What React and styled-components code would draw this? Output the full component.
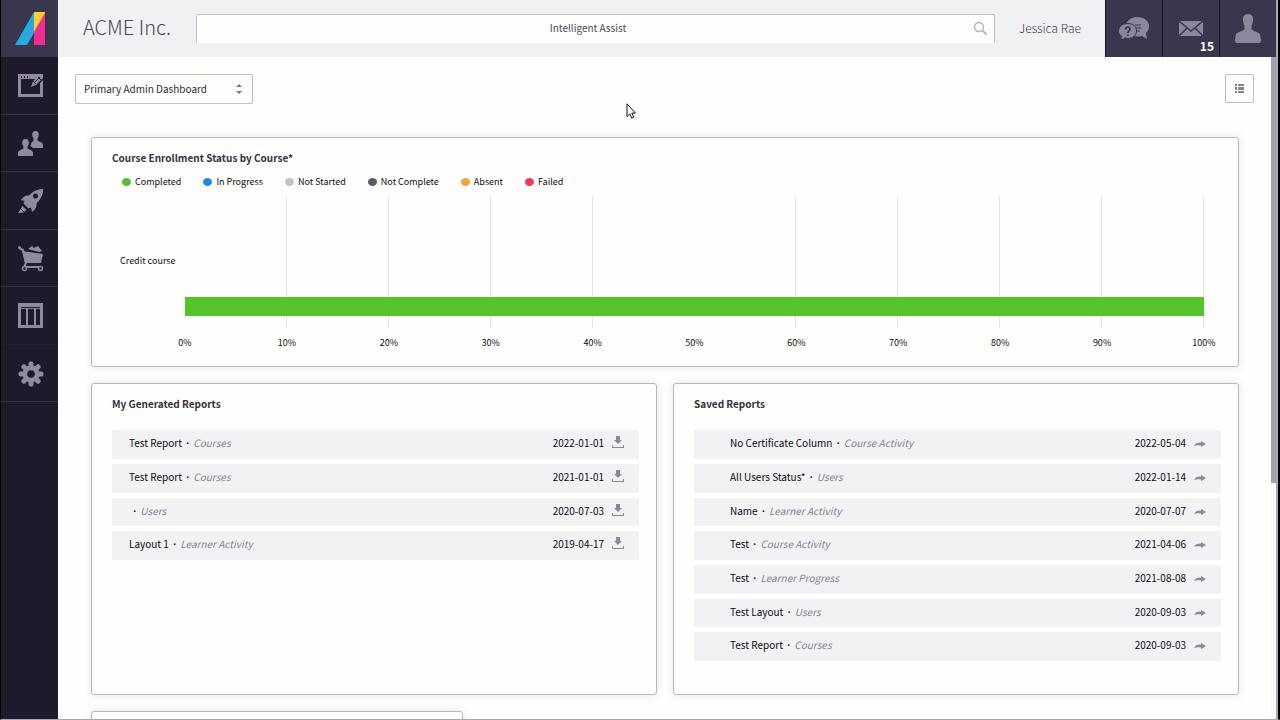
import React from "react";
import styled, { createGlobalStyle } from "styled-components";

const GlobalStyle = createGlobalStyle`
  *, *::before, *::after { box-sizing: border-box; }
  body {
    margin: 0;
    background: #fefefd;
    color: #0c0c12;
    font-family: "Noto Sans CJK SC", "Open Sans", sans-serif;
    font-size: 10px;
    line-height: 16px;
  }
  button, input, select { font: inherit; color: inherit; margin: 0; }
  h1, h2, ul, p { margin: 0; padding: 0; }
`;

const Shell = styled.div`
  height: 100vh;
  min-height: 400px;
  display: flex;
  overflow: hidden;
  border-left: 1px solid #000;
  border-right: 2px solid #000;
  border-bottom: 1px solid #a9a8ad;
`;

const Sidebar = styled.aside`
  flex: 0 0 57px;
  background: #1e1a2b;
`;

const LogoLink = styled.a`
  height: 57px;
  display: flex;
  align-items: center;
  justify-content: center;
  padding-left: 2px;
  background: #39364d;
`;

const Nav = styled.nav`
  height: 345px;
  display: flex;
  flex-direction: column;
`;

const NavLink = styled.a`
  flex: 1;
  display: flex;
  align-items: center;
  justify-content: center;
  padding: 2px 0 0 2px;
  border-bottom: 1px solid ${(p) => (p.$faint ? "#23202f" : "#373549")};
  color: #8d8ba0;
`;

const Body = styled.div`
  flex: 1;
  min-width: 0;
  display: flex;
  flex-direction: column;
  border-right: 2px solid #a9a8ad;
`;

const Header = styled.header`
  flex: 0 0 57px;
  display: flex;
  align-items: center;
  background: #f1f1f4;
`;

const Brand = styled.h1`
  flex: 0 0 138px;
  padding: 0 0 3px 25px;
  font-size: 20px;
  line-height: 32px;
  font-weight: 300;
  color: #4b4858;
  white-space: nowrap;
`;

const SearchBox = styled.label`
  flex: 1;
  height: 30px;
  display: flex;
  align-items: center;
  padding: 0 6px;
  border: 1px solid #bfbec5;
  border-bottom-color: #f4f4f6;
  border-radius: 2px;
  background: #fefefd;
  color: #b4b3bb;
`;

const SearchInput = styled.input`
  flex: 1;
  min-width: 0;
  border: 0;
  outline: 0;
  padding: 0 0 2px;
  background: transparent;
  text-align: center;
  &::placeholder { color: #4a4854; opacity: 1; }
`;

const UserName = styled.span`
  flex: 0 0 110px;
  padding-bottom: 2px;
  text-align: center;
  font-size: 12px;
  line-height: 20px;
  font-weight: 300;
  color: #3d3a4b;
`;

const HeaderButton = styled.button`
  flex: 0 0 57px;
  height: 57px;
  display: flex;
  align-items: center;
  justify-content: center;
  position: relative;
  padding: 0;
  border: 0;
  border-left: 1px solid #14112a;
  background: #39364d;
  color: #8a889b;
`;

const Badge = styled.span`
  position: absolute;
  right: 5px;
  bottom: 3px;
  color: #fff;
  font-size: 12px;
  font-weight: 700;
`;

const Viewport = styled.div`
  flex: 1;
  min-height: 0;
  display: flex;
`;

const Main = styled.main`
  flex: 1;
  min-width: 0;
  overflow: hidden;
`;

const Scrollbar = styled.div`
  flex: 0 0 5px;
  background: #fafafb;
`;

const ScrollThumb = styled.div`
  height: 426px;
  background: #a2a0b0;
`;

const Toolbar = styled.div`
  display: flex;
  justify-content: space-between;
  padding: 17px 17px 33px;
`;

const SelectBox = styled.label`
  width: 178px;
  height: 30px;
  display: flex;
  align-items: center;
  padding-right: 10px;
  border: 1px solid #bfbec5;
  border-radius: 2px;
  color: #77757f;
`;

const Select = styled.select`
  flex: 1;
  min-width: 0;
  height: 28px;
  appearance: none;
  border: 0;
  outline: 0;
  padding: 0 0 0 8px;
  background: transparent;
  color: #2e2b3b;
`;

const IconButton = styled.button`
  width: 29px;
  height: 29px;
  display: flex;
  align-items: center;
  justify-content: center;
  padding: 0;
  border: 1px solid #bfbec5;
  border-radius: 2px;
  background: transparent;
  color: #84829a;
`;

const Cards = styled.div`
  display: grid;
  grid-template-columns: 1fr 1fr;
  gap: 16px;
  padding: 0 32px 0 33px;
`;

const Card = styled.section`
  min-height: ${(p) => p.$minHeight || 0}px;
  grid-column: ${(p) => (p.$wide ? "1 / -1" : "auto")};
  max-width: ${(p) => (p.$narrow ? "372px" : "none")};
  padding: 11px 17px 14px 20px;
  border: 1px solid #b9b8c1;
  border-radius: 3px;
  background: #fefefd;
  box-shadow: 0 0 8px rgba(57, 54, 77, 0.12);
`;

const CardTitle = styled.h2`
  font-size: 10px;
  line-height: 17px;
  font-weight: 700;
  color: #35323f;
`;

const Legend = styled.ul`
  display: flex;
  gap: 22px;
  padding: 8px 0 0 10px;
  list-style: none;
  font-size: 9px;
`;

const LegendItem = styled.li`
  display: flex;
  align-items: center;
  gap: 4px;
  &::before {
    content: "";
    width: 9px;
    height: 8px;
    border-radius: 50%;
    background: ${(p) => p.$color};
  }
`;

const Chart = styled.div`
  display: grid;
  grid-template-columns: 73px 1fr;
  padding: 6px 17px 0 0;
  font-size: 9px;
`;

const Category = styled.div`
  display: flex;
  align-items: center;
  padding: 0 0 2px 8px;
`;

const Plot = styled.div`
  position: relative;
  height: 132px;
`;

const GridLines = styled.div`
  height: 100%;
  display: flex;
`;

const GridCell = styled.div`
  flex: 1;
  border-right: 1px solid ${(p) => (p.$bare ? "transparent" : "#e3e3e8")};
`;

const Bar = styled.div`
  position: absolute;
  left: 0;
  bottom: 12px;
  height: 19px;
  background: #55c428;
`;

const Axis = styled.div`
  grid-column: 2;
  display: flex;
  justify-content: space-between;
  padding-top: 7px;
`;

const Tick = styled.span`
  width: 0;
  display: flex;
  justify-content: center;
  white-space: nowrap;
`;

const ReportList = styled.ul`
  display: flex;
  flex-direction: column;
  gap: 5px;
  margin-top: 18px;
  list-style: none;
`;

const Report = styled.li`
  height: 29px;
  display: flex;
  align-items: center;
  padding: 0 15px 3px ${(p) => (p.$indent ? 36 : 17)}px;
  background: #f2f2f5;
  border-radius: 2px;
  &:nth-child(3n) { height: 28px; }
`;

const ReportName = styled.p`
  flex: 1;
  white-space: pre;
`;

const Dot = styled.span`
  margin: 0 2px;
  font-family: "Open Sans", sans-serif;
  font-weight: 700;
`;

const Kind = styled.em`
  color: #85838f;
`;

const RowButton = styled.button`
  width: 12px;
  height: 14px;
  display: flex;
  align-items: center;
  justify-content: center;
  margin-left: 8px;
  padding: 0;
  border: 0;
  background: transparent;
  color: #8a8996;
`;

const Pointer = styled.svg`
  position: absolute;
  left: 626px;
  top: 103px;
`;

const DashboardIcon = () => (
  <svg width="26" height="24" viewBox="0 0 26 24">
    <path fill="currentColor" fillRule="evenodd" d="M0 0h25v23H0zM3 5v15h19V5z" />
    <path fill="#1e1a2b" d="M3 2h1v2H3zM6 2h1v2H6zM9 2h1v2H9zM22 5h3v1l-6 6-5 2-1-1 2-6 2-2z" />
    <path fill="currentColor" d="M13 13l2-6 7-6 3 3-7 7z" />
    <path stroke="#1e1a2b" d="M15 7l3 3M17 8l5-5M20 3l3 3" fill="none" />
  </svg>
);

const UsersIcon = () => (
  <svg width="26" height="26" viewBox="0 0 26 26" fill="currentColor">
    <path d="M17.500 0c2.500 0 3.600 1.800 3.300 4-.2 1.700-.8 2.700-1.300 3.300v2c1 1.400 5.500 2 5.500 4.500V17H14.800c-.6-1-2-1.600-2.600-2 .8-.8 1.200-2 1.100-3.400 1.200-.8 2-1.300 2.200-2.300v-2c-.6-.6-1.200-1.600-1.300-3.300C14 1.800 15 0 17.500 0z" />
    <path d="M7.500 8c2.500 0 3.600 1.800 3.300 4-.2 1.700-.8 2.700-1.300 3.300v2c1 1.400 5.500 2 5.500 4.500V25H0v-3.200c0-2.500 4.500-3.100 5.500-4.500v-2c-.6-.6-1.200-1.600-1.300-3.300C4 9.800 5 8 7.500 8z" />
  </svg>
);

const RocketIcon = () => (
  <svg width="26" height="26" viewBox="0 0 26 26" fill="currentColor">
    <path fillRule="evenodd" d="M25 1c-5-.4-10 2-14 6.500-3-.5-5.500.8-8 4.500l3.500 1-1 2.500 5 5L13 19.500l1 4.500c3.300-2.300 5-5 4.500-8.500C23 11 25.500 6 25 1zM17.500 5.500a2.500 2.500 0 1 1 0 5 2.500 2.500 0 0 1 0-5z" />
    <path d="M4.500 18l4 4-3 2.500L0 25z" />
    <path stroke="#1e1a2b" d="M2 20l4 4" />
  </svg>
);

const CartIcon = () => (
  <svg width="26" height="26" viewBox="0 0 26 26">
    <path fill="currentColor" d="M4 5l21 3-2 9H7zM10 3l4-3 2 2 4-2 4 5-3 1z" />
    <path fill="none" stroke="currentColor" strokeWidth="2" d="M1 2l4 2 3 13-2 4h17" />
    <circle cx="1.500" cy="1.500" r="1.500" fill="currentColor" />
    <circle cx="6.500" cy="22.500" r="2" fill="#1e1a2b" stroke="currentColor" strokeWidth="1.500" />
    <circle cx="22.500" cy="22.500" r="2" fill="#1e1a2b" stroke="currentColor" strokeWidth="1.500" />
  </svg>
);

const ColumnsIcon = () => (
  <svg width="26" height="26" viewBox="0 0 26 26">
    <path fill="currentColor" fillRule="evenodd" d="M0 0h25v25H0zM3 4v1h19V4zM3 6v16h5V6zM10 6v16h6V6zM18 6v16h4V6z" />
  </svg>
);

const GearIcon = () => (
  <svg width="26" height="26" viewBox="-13 -13 26 26">
    {[0, 45, 90, 135].map((angle) => (
      <rect key={angle} x="-2.500" y="-12.500" width="5" height="25" rx="2" fill="currentColor" transform={`rotate(${angle})`} />
    ))}
    <circle r="8.500" fill="currentColor" />
    <circle r="3.800" fill="#1e1a2b" />
  </svg>
);

const LogoIcon = () => (
  <svg width="31" height="34" viewBox="0 0 31 34">
    <path fill="#27aae1" d="M19 0L0 33h12l7-12z" />
    <path fill="#ffcc32" d="M19 0h11v2L19 21z" />
    <path fill="#ee2e92" d="M30 1v32H19V20z" />
  </svg>
);

const ChatIcon = () => (
  <svg width="32" height="24" viewBox="0 0 32 24">
    <path fill="currentColor" d="M19 0c7 0 12 4 12 9 0 3-1 5-3 7l1 6-5-3c-8 2-16-2-16-10 0-5 5-9 11-9z" />
    <path stroke="#39364d" d="M17 8h6M18 11h5M17 14h5" />
    <path fill="currentColor" stroke="#39364d" d="M10 6.500c5 0 8.500 3 8.500 7.500s-4 7.500-8.500 7.500l-3-.5-4.500 2 1-4c-2-1-3-3-3-5 0-4.500 4-7.500 9.500-7.500z" />
    <path fill="none" stroke="#39364d" strokeWidth="1.800" d="M7.500 12.500c0-3 4.500-3 4.500-.5 0 2-2.200 1.700-2.200 4M9.800 17.500v1.500" />
  </svg>
);

const MailIcon = () => (
  <svg width="24" height="15" viewBox="0 0 24 15">
    <path fill="currentColor" d="M0 0h24v15H0z" />
    <path fill="none" stroke="#39364d" strokeWidth="1.500" d="M0 0l12 10L24 0M0 15l8-8M24 15l-8-8" />
  </svg>
);

const PersonIcon = () => (
  <svg width="26" height="29" viewBox="0 0 26 29">
    <path fill="currentColor" d="M13 0c4 0 5.500 3 5 6.500C17.700 9 17 11 16.500 12v3c1 2.500 8.500 2.500 9 7l.5 5-1 2H1l-1-2 .5-5c.5-4.500 8-4.500 9-7v-3C9 11 8.300 9 8 6.500 7.500 3 9 0 13 0z" />
  </svg>
);

const SearchIcon = () => (
  <svg width="15" height="15" viewBox="0 0 15 15" fill="none" stroke="currentColor">
    <circle cx="6" cy="6" r="4.500" strokeWidth="1.300" />
    <path strokeWidth="1.800" d="M9.500 9.500l4 4" />
  </svg>
);

const SortIcon = () => (
  <svg width="6" height="12" viewBox="0 0 6 12" fill="currentColor">
    <path d="M3 1l3 3H0zM3 11l3-3H0z" />
  </svg>
);

const ListIcon = () => (
  <svg width="9" height="9" viewBox="0 0 9 9" fill="currentColor">
    <path d="M0 0h2v2H0zM3 0h6v2H3zM0 3h2v3H0zM3 3h6v3H3zM0 7h2v2H0zM3 7h6v2H3z" />
  </svg>
);

const DownloadIcon = () => (
  <svg width="12" height="14" viewBox="0 0 12 14" fill="currentColor">
    <path d="M4 0h4v4h2L6 8 2 4h2zM0 9h1v2h10V9h1v3H0z" />
  </svg>
);

const ArrowIcon = () => (
  <svg width="12" height="10" viewBox="0 0 12 10" fill="currentColor">
    <path d="M0 8c1-2.500 3-3.500 7-3.500V3l5 3-5 3V7.500C4 7 2 7 0 8z" />
  </svg>
);

const navItems = [
  ["Dashboards", DashboardIcon],
  ["Users", UsersIcon],
  ["Courses", RocketIcon],
  ["Store", CartIcon],
  ["Reports", ColumnsIcon],
  ["Settings", GearIcon],
];

const legend = [
  ["Completed", "#55c02b"],
  ["In Progress", "#1e88e5"],
  ["Not Started", "#c1c0c7"],
  ["Not Complete", "#5b5966"],
  ["Absent", "#f2a43a"],
  ["Failed", "#f5365c"],
];

const generated = [
  ["Test Report", "Courses", "2022-01-01"],
  ["Test Report", "Courses", "2021-01-01"],
  ["", "Users", "2020-07-03"],
  ["Layout 1", "Learner Activity", "2019-04-17"],
];

const saved = [
  ["No Certificate Column", "Course Activity", "2022-05-04"],
  ["All Users Status*", "Users", "2022-01-14"],
  ["Name", "Learner Activity", "2020-07-07"],
  ["Test", "Course Activity", "2021-04-06"],
  ["Test", "Learner Progress", "2021-08-08"],
  ["Test Layout", "Users", "2020-09-03"],
  ["Test Report", "Courses", "2020-09-03"],
];

const completedShare = 100;
const ticks = Array.from({ length: 11 }, (_, i) => i * 10);

function Reports({ rows, indent, icon: Icon, action }) {
  return (
    <ReportList>
      {rows.map(([name, kind, date], i) => (
        <Report key={i} $indent={indent}>
          <ReportName>{name} <Dot>·</Dot> <Kind>{kind}</Kind></ReportName>
          <time dateTime={date}>{date}</time>
          <RowButton aria-label={action}><Icon /></RowButton>
        </Report>
      ))}
    </ReportList>
  );
}

export default function App() {
  return (
    <>
      <GlobalStyle />
      <Shell>
        <Sidebar>
          <LogoLink href="#home" aria-label="Home"><LogoIcon /></LogoLink>
          <Nav>
            {navItems.map(([label, Icon]) => (
              <NavLink key={label} href="#" aria-label={label} $faint={label === "Reports"}><Icon /></NavLink>
            ))}
          </Nav>
        </Sidebar>
        <Body>
          <Header>
            <Brand>ACME Inc.</Brand>
            <SearchBox>
              <SearchInput type="text" placeholder="Intelligent Assist" aria-label="Intelligent Assist" />
              <SearchIcon />
            </SearchBox>
            <UserName>Jessica Rae</UserName>
            <HeaderButton aria-label="Help"><ChatIcon /></HeaderButton>
            <HeaderButton aria-label="Messages"><MailIcon /><Badge>15</Badge></HeaderButton>
            <HeaderButton aria-label="Profile"><PersonIcon /></HeaderButton>
          </Header>
          <Viewport>
            <Main>
              <Toolbar>
                <SelectBox>
                  <Select aria-label="Dashboard">
                    <option>Primary Admin Dashboard</option>
                  </Select>
                  <SortIcon />
                </SelectBox>
                <IconButton aria-label="Dashboard options"><ListIcon /></IconButton>
              </Toolbar>
              <Cards>
                <Card $wide $minHeight={230}>
                  <CardTitle>Course Enrollment Status by Course*</CardTitle>
                  <Legend>
                    {legend.map(([label, color]) => (
                      <LegendItem key={label} $color={color}>{label}</LegendItem>
                    ))}
                  </Legend>
                  <Chart>
                    <Category>Credit course</Category>
                    <Plot>
                      <GridLines>
                        {ticks.slice(1).map((t) => <GridCell key={t} $bare={t === 50} />)}
                      </GridLines>
                      <Bar style={{ width: `${completedShare}%` }} />
                    </Plot>
                    <Axis>
                      {ticks.map((t) => <Tick key={t}>{t}%</Tick>)}
                    </Axis>
                  </Chart>
                </Card>
                <Card $minHeight={312}>
                  <CardTitle>My Generated Reports</CardTitle>
                  <Reports rows={generated} icon={DownloadIcon} action="Download report" />
                </Card>
                <Card $minHeight={312}>
                  <CardTitle>Saved Reports</CardTitle>
                  <Reports rows={saved} indent icon={ArrowIcon} action="Open report" />
                </Card>
                <Card $narrow $minHeight={200} />
              </Cards>
            </Main>
            <Scrollbar><ScrollThumb /></Scrollbar>
          </Viewport>
        </Body>
      </Shell>
      <Pointer width="10" height="16" viewBox="0 0 10 16" aria-hidden="true">
        <path fill="#fff" stroke="#111122" d="M1 .8v12.700l2.800-2.600 2 4.200 2-1-2-4h3.600z" />
      </Pointer>
    </>
  );
}
